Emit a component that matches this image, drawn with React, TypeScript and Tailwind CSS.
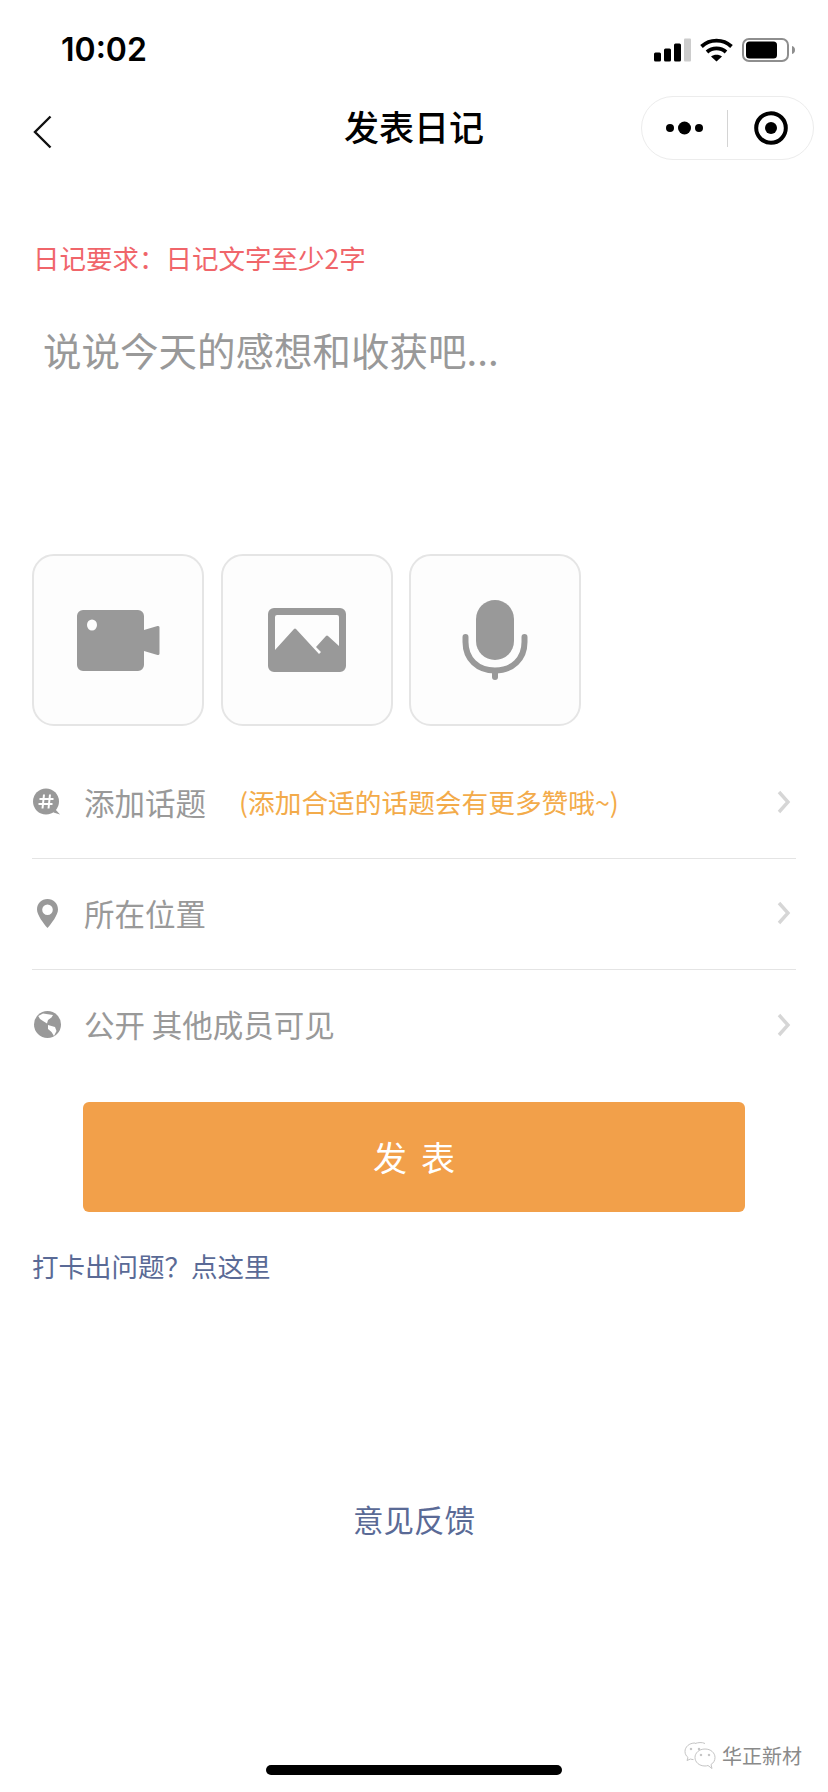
const cjk = "font-['Noto_Sans_CJK_SC','Noto_Sans',sans-serif]";

const StatusBar = () => {
  return (
    <div className="h-[88px] flex items-center justify-between pl-[61px] pr-[33px] pt-[11px]">
      <span className="font-['Inter',sans-serif] font-semibold text-[32px] leading-none text-black">10:02</span>
      <div className="flex items-center gap-[9px]">
        <svg width="37" height="24" viewBox="0 0 37 24">
          <rect x="0" y="14.500" width="7" height="9" rx="1.500" fill="#000" />
          <rect x="10" y="10.500" width="7" height="13" rx="1.500" fill="#000" />
          <rect x="20" y="5.500" width="7" height="18" rx="1.500" fill="#000" />
          <rect x="30" y="0.500" width="7" height="23" rx="1" fill="#ccc" />
        </svg>
        <svg width="33" height="24" viewBox="0 0 33 24">
          <path d="M1.500 8.500a22 22 0 0 1 30 0" fill="none" stroke="#000" strokeWidth="3.800" />
          <path d="M7 14a14 14 0 0 1 19 0" fill="none" stroke="#000" strokeWidth="3.800" />
          <path d="M11 18.500c3-2.500 8-2.500 11 0l-5.500 5z" fill="#000" />
        </svg>
        <svg width="53" height="24" viewBox="0 0 53 24">
          <rect x="1" y="1" width="45" height="22" rx="6" fill="none" stroke="#8e8e8e" strokeWidth="2" />
          <rect x="4" y="3.500" width="31" height="17" rx="3.500" fill="#000" />
          <path d="M50 8c2 .500 3 2 3 4s-1 3.500-3 4z" fill="#8e8e8e" />
        </svg>
      </div>
    </div>
  );
};

const NavBar = () => {
  return (
    <div className="relative h-[80px] flex items-center justify-center pb-[6px]">
      <svg className="absolute left-[32px] top-[27px]" width="20" height="34" viewBox="0 0 20 34">
        <path d="M18.500 1.500 3 17l15.500 15.500" fill="none" stroke="#111" strokeWidth="2.400" />
      </svg>
      <span className={`${cjk} font-medium text-[35px] leading-none text-black`}>发表日记</span>
      <div className="absolute left-[641px] top-[8px] w-[173px] h-[64px] rounded-full border border-[#ececec] bg-white flex items-center">
        <div className="flex-1 flex items-center justify-center">
          <svg width="37" height="14" viewBox="0 0 37 14">
            <circle cx="4" cy="7" r="4" fill="#000" />
            <circle cx="18.500" cy="7" r="6.500" fill="#000" />
            <circle cx="33" cy="7" r="4" fill="#000" />
          </svg>
        </div>
        <div className="w-px h-[37px] bg-[#d4d4d4]" />
        <div className="flex-1 flex items-center justify-center">
          <svg width="34" height="34" viewBox="0 0 34 34">
            <circle cx="17" cy="17" r="14.800" fill="none" stroke="#000" strokeWidth="4" />
            <circle cx="17" cy="17" r="6" fill="#000" />
          </svg>
        </div>
      </div>
    </div>
  );
};

const VideoIcon = () => (
  <svg width="84" height="62" viewBox="0 0 84 62" fill="#999">
    <path d="M7 1h55a6 6 0 0 1 6 6v14l13.500-4a1.500 1.500 0 0 1 2 1.500v26a1.500 1.500 0 0 1-2 1.500l-13.500-4v14a6 6 0 0 1-6 6H7a6 6 0 0 1-6-6V7a6 6 0 0 1 6-6z" />
    <ellipse cx="16" cy="16" rx="5" ry="5.500" fill="#fdfdfd" />
  </svg>
);

const ImageIcon = () => (
  <svg width="78" height="64" viewBox="0 0 78 64" fill="#999">
    <path
      fillRule="evenodd"
      d="M6 0h66a6 6 0 0 1 6 6v52a6 6 0 0 1-6 6H6a6 6 0 0 1-6-6V6a6 6 0 0 1 6-6zM9 7a2 2 0 0 0-2 2v33l19-21a1.500 1.500 0 0 1 2 0l23 25 2-2-5-5 10-11a1.500 1.500 0 0 1 2 0l11 10V9a2 2 0 0 0-2-2z"
    />
  </svg>
);

const MicIcon = () => (
  <svg width="66" height="80" viewBox="0 0 66 80" fill="none">
    <rect x="14" y="0" width="38" height="60" rx="19" fill="#999" />
    <path d="M3.500 37v5c0 17 12 28.500 29.500 28.500S62.500 59 62.500 42v-5" stroke="#999" strokeWidth="6" strokeLinecap="round" />
    <path d="M33 71v6" stroke="#999" strokeWidth="6" strokeLinecap="round" />
  </svg>
);

const Tile = ({ children }: { children: React.ReactNode }) => {
  return (
    <div className="w-[172px] h-[172px] rounded-[22px] border-2 border-[#e5e5e5] bg-[#fdfdfd] flex items-center justify-center">
      {children}
    </div>
  );
};

const TopicIcon = () => (
  <svg width="28" height="28" viewBox="0 0 28 28">
    <circle cx="13" cy="13.500" r="13" fill="#999" />
    <path d="M22 21l5 5.500-6.500-2z" fill="#999" />
    <path d="M11 6.500l-1.500 14M17 6.500l-1.500 14M6.500 11h14M5.500 16h14" stroke="#fff" strokeWidth="2" fill="none" />
  </svg>
);

const PinIcon = () => (
  <svg width="21" height="29" viewBox="0 0 21 29">
    <path
      fillRule="evenodd"
      d="M10.500 0C16.500 0 21 4.500 21 10.500 21 16 14.500 24.500 10.500 29 6.500 24.500 0 16 0 10.500 0 4.500 4.500 0 10.500 0zm0 5.500a5.300 5.300 0 1 0 0 10.600 5.300 5.300 0 0 0 0-10.600z"
      fill="#999"
    />
  </svg>
);

const GlobeIcon = () => (
  <svg width="27" height="27" viewBox="0 0 27 27">
    <circle cx="13.500" cy="13.500" r="13.500" fill="#999" />
    <path d="M4.300 5 9 2.500 19 4l-1.500 2.500L14 9l-1 3.500L9 10 6 8z" fill="#fff" />
    <path d="M14 14l7 2 1.500 4-2.500 5-2.500-4L14 18z" fill="#fff" />
  </svg>
);

const RowChevron = () => (
  <svg className="ml-auto mr-[5px]" width="14" height="24" viewBox="0 0 14 24">
    <path d="M2 2l9 10-9 10" fill="none" stroke="#d6d6d6" strokeWidth="3.400" />
  </svg>
);

const Row = ({ icon, label, hint }: { icon: React.ReactNode; label: string; hint?: string }) => {
  return (
    <div className="h-[111px] flex items-center border-b border-[#e4e4e4] last:border-b-0 pb-[2px]">
      <div className="w-[52px] flex items-center">{icon}</div>
      <span className="text-[30.500px] text-[#999] leading-none">{label}</span>
      {hint && <span className="ml-[33px] text-[26.700px] text-[#f3ab4a] leading-none">{hint}</span>}
      <RowChevron />
    </div>
  );
};

export default function App() {
  return (
    <div className={`${cjk} relative w-[828px] h-[1792px] bg-white overflow-hidden`}>
      <StatusBar />
      <NavBar />

      <div className="px-[32px] pt-[73px]">
        <p className="text-[26.500px] leading-[34px] text-[#f0656a] pl-[1px]">日记要求：日记文字至少2字</p>
        <p className="pl-[11px] pt-[50px] h-[270px] text-[38.500px] leading-[48px] text-[#999]">说说今天的感想和收获吧...</p>

        <div className="flex gap-[16.500px] mt-[9px]">
          <Tile><VideoIcon /></Tile>
          <Tile><ImageIcon /></Tile>
          <Tile><MicIcon /></Tile>
        </div>

        <div className="mt-[22px]">
          <Row icon={<div className="pl-[1px]"><TopicIcon /></div>} label="添加话题" hint="(添加合适的话题会有更多赞哦~)" />
          <Row icon={<div className="pl-[5px]"><PinIcon /></div>} label="所在位置" />
          <Row icon={<div className="pl-[2px]"><GlobeIcon /></div>} label="公开 其他成员可见" />
        </div>

        <button className="block mx-auto mt-[21px] w-[662px] h-[110px] rounded-[6px] bg-[#f2a04a] text-white text-[34px] tracking-[14px] pl-[14px] pb-[2px]">
          发表
        </button>

        <p className="mt-[32px] text-[26.500px] leading-[44px] text-[#5a6a96]">打卡出问题？点这里</p>
      </div>

      <p className="mt-[209px] text-center text-[30.500px] leading-[44px] text-[#5a6a96]">意见反馈</p>

      <div className="absolute right-[26px] bottom-[22px] flex items-center gap-[6px]">
        <svg width="32" height="28" viewBox="0 0 32 28" fill="none" stroke="#c4c4c4" strokeWidth="1">
          <path d="M11 1C5 1 1 5 1 9.500c0 2.500 1.200 4.500 3 6l-1 3 3.500-1.500c1 .4 2 .6 3 .6" />
          <path d="M21 1.500c-3-1.500-7-1-10 0M21 7c-6 0-10 4-10 8.500S15 24 21 24c1 0 2-.2 3-.5l4 3-1-4c2.500-1.500 4-4 4-7C31 11 27 7 21 7z" />
          <circle cx="7" cy="7" r=".8" fill="#999" />
          <circle cx="15" cy="7" r=".8" fill="#999" />
          <circle cx="17" cy="13" r=".8" fill="#999" />
          <circle cx="25" cy="13" r=".8" fill="#999" />
        </svg>
        <span className="text-[20px] leading-none text-[#8a8a8a]">华正新材</span>
      </div>

      <div className="absolute left-[266px] bottom-[17px] w-[296px] h-[10px] rounded-full bg-black" />
    </div>
  );
}
